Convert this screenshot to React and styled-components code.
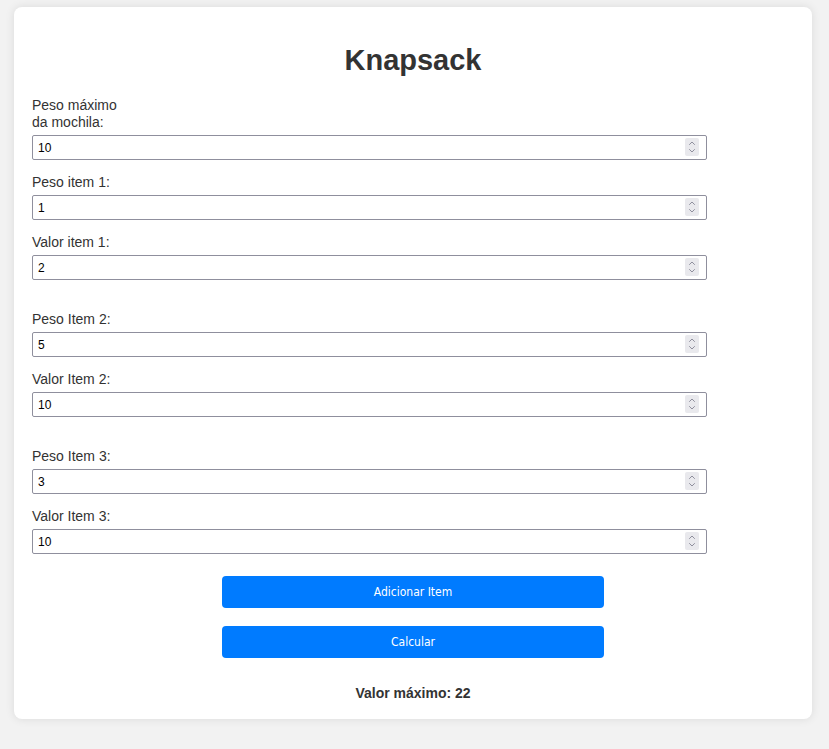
import React, { useState } from "react";
import styled, { createGlobalStyle } from "styled-components";

const GlobalStyle = createGlobalStyle`
  body {
    margin: 0;
    background-color: #f2f2f2;
    font-family: "Liberation Sans", Arial, sans-serif;
  }
`;

const Container = styled.div`
  width: 798px;
  box-sizing: border-box;
  margin: 7px 0 31px 14px;
  padding: 20px 18px 18px;
  background-color: #fff;
  border-radius: 8px;
  box-shadow: 0 0 10px rgba(0, 0, 0, 0.1);
`;

const Title = styled.h1`
  margin: 17px 0 20px;
  font-size: 29px;
  line-height: 33px;
  font-weight: 700;
  text-align: center;
  color: #333;
`;

// sits after a field's 14px bottom margin, so the 31px collapses to a 17px extra gap
const ItemGroup = styled.div`
  margin-top: ${(p) => (p.$first ? "0" : "31px")};
`;

const Field = styled.div`
  margin-bottom: 14px;
`;

const Label = styled.label`
  display: block;
  width: 100px;
  margin-bottom: 4px;
  font-size: 14px;
  line-height: 17px;
  color: #333;
`;

const InputWrap = styled.div`
  position: relative;
  width: 675px;
`;

const Input = styled.input`
  display: block;
  width: 100%;
  height: 25px;
  box-sizing: border-box;
  padding: 0 30px 0 5px;
  border: 1px solid #8f8f9d;
  border-radius: 2px;
  font-family: "Liberation Sans", Arial, sans-serif;
  font-size: 12px;
  color: #000;
  background: #fff;
  -moz-appearance: textfield;
  &::-webkit-inner-spin-button,
  &::-webkit-outer-spin-button {
    -webkit-appearance: none;
    margin: 0;
  }
`;

const Spinner = styled.span`
  position: absolute;
  top: 3px;
  right: 8px;
  width: 14px;
  height: 18px;
  display: flex;
  align-items: center;
  justify-content: center;
  background-color: #e9e9ed;
  border-radius: 2px;
`;

const Actions = styled.div`
  display: flex;
  flex-direction: column;
  align-items: center;
  gap: 18px;
  margin-top: 22px;
`;

const Button = styled.button`
  width: 382px;
  height: 32px;
  border: none;
  border-radius: 4px;
  background-color: #007bff;
  color: #fff;
  font-family: "DejaVu Sans Condensed", "DejaVu Sans", sans-serif;
  font-stretch: condensed;
  font-size: 12px;
  cursor: pointer;
`;

const Result = styled.p`
  margin: 27px 0 0;
  font-size: 14px;
  line-height: 16px;
  font-weight: 700;
  text-align: center;
  color: #333;
`;

const SpinIcon = () => (
  <svg width="8" height="14" viewBox="0 0 8 14" fill="none">
    <path d="M1.5 4.5 L4 2 L6.5 4.5" stroke="#8f8f9d" strokeWidth="1" strokeLinecap="round" strokeLinejoin="round" />
    <path d="M1.5 9.5 L4 12 L6.5 9.5" stroke="#8f8f9d" strokeWidth="1" strokeLinecap="round" strokeLinejoin="round" />
  </svg>
);

const NumberField = ({ label, value }) => (
  <Field>
    <Label>{label}</Label>
    <InputWrap>
      <Input type="number" defaultValue={value} />
      <Spinner>
        <SpinIcon />
      </Spinner>
    </InputWrap>
  </Field>
);

const initialItems = [
  { peso: 1, valor: 2, pesoLabel: "Peso item 1:", valorLabel: "Valor item 1:" },
  { peso: 5, valor: 10, pesoLabel: "Peso Item 2:", valorLabel: "Valor Item 2:" },
  { peso: 3, valor: 10, pesoLabel: "Peso Item 3:", valorLabel: "Valor Item 3:" },
];

export default function App() {
  const [items] = useState(initialItems);

  return (
    <>
      <GlobalStyle />
      <Container>
        <Title>Knapsack</Title>
        <NumberField label="Peso máximo da mochila:" value={10} />
        {items.map((item, i) => (
          <ItemGroup key={i} $first={i === 0}>
            <NumberField label={item.pesoLabel} value={item.peso} />
            <NumberField label={item.valorLabel} value={item.valor} />
          </ItemGroup>
        ))}
        <Actions>
          <Button>Adicionar Item</Button>
          <Button>Calcular</Button>
        </Actions>
        <Result>Valor máximo: 22</Result>
      </Container>
    </>
  );
}
